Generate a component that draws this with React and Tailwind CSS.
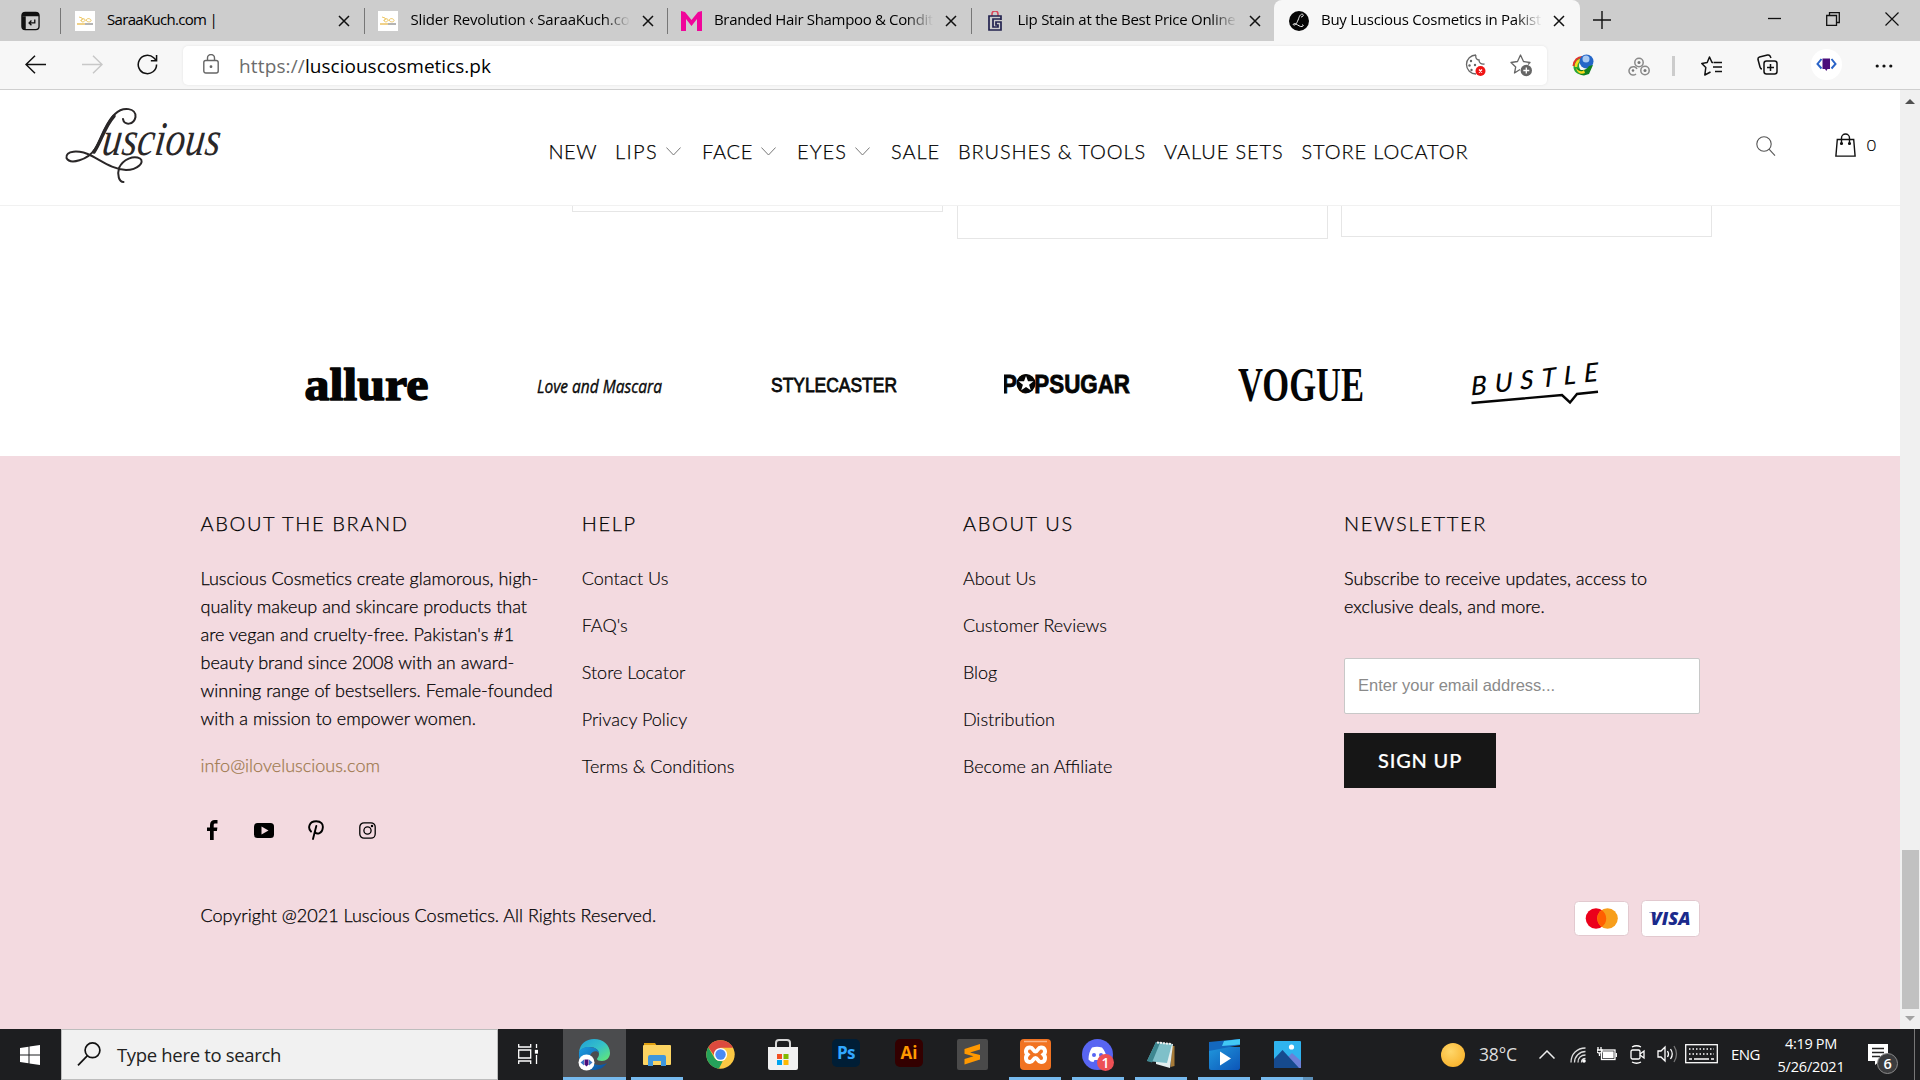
import React, { useLayoutEffect, useRef, useState } from "react";

/* Text whose tracking is adjusted so that it spans the given width. */
function Fit({ w, className = "", children }) {
  const ref = useRef(null);
  const [ls, setLs] = useState(0);
  useLayoutEffect(() => {
    const el = ref.current;
    const n = el.textContent.length;
    setLs((w - el.getBoundingClientRect().width) / n);
  }, [w]);
  return (
    <span ref={ref} className={"inline-block whitespace-nowrap " + className} style={{ letterSpacing: ls + "px" }}>
      {children}
    </span>
  );
}

const Cross = () => (
  <svg width="12" height="12" viewBox="0 0 12 12" className="shrink-0" stroke="#111" strokeWidth="1.5">
    <path d="M1 1l10 10M11 1L1 11" />
  </svg>
);

const SaraaIcon = () => (
  <svg width="20" height="20" viewBox="0 0 20 20">
    <rect width="20" height="20" fill="#fff" />
    <path d="M4 6l3 1 1 2M6 10c0-3 4-3 4-1s-4 3-4 0M11 10c0-3 4-3 5-1s-4 3-5 0" stroke="#eec866" fill="none" strokeWidth="1" />
    <path d="M2 13h8" stroke="#e8b94a" strokeWidth="1.3" />
    <path d="M10 13h8" stroke="#8c8c8c" strokeWidth="1.3" />
  </svg>
);
const MIcon = () => (
  <svg width="21" height="20" viewBox="0 0 21 20">
    <path d="M0 0l4 1 6.500 8L17 1l4-1v20h-5V8l-5.500 7L5 8v12H0z" fill="#f0069a" />
  </svg>
);
const GIcon = () => (
  <svg width="20" height="20" viewBox="0 0 20 20" fill="none">
    <path d="M7 5V3a3 3 0 0 1 6 0v2" stroke="#d8455a" strokeWidth="1.500" />
    <path d="M16 9V5H4v14h12v-8h-5v3h2v2H8V8h8" stroke="#23234f" strokeWidth="1.700" />
  </svg>
);
const LIcon = () => (
  <svg width="20" height="20" viewBox="0 0 20 20">
    <circle cx="10" cy="10" r="10" fill="#050505" />
    <path d="M12 6c1.500 0 3-1.500 2-2.500s-3 0-4 3-3 8-5 7.500 0-2 2-1 4 3 6 2.500 1.500-2 0-1.500" stroke="#eee" strokeWidth="1" fill="none" />
  </svg>
);

function Tab({ icon, title, w, mask }) {
  return (
    <div className="flex h-[41px] w-[303.500px] items-center">
      <div className="h-[26px] w-px bg-[#777]" />
      <div className="ml-[13px] flex w-[21px] justify-center">{icon}</div>
      <div className={"-mt-0.5 ml-3 flex w-[219px] overflow-hidden text-[15px] " + (mask ? "[mask-image:linear-gradient(90deg,#000_88%,transparent_100%)]" : "")}>
        <Fit w={w}>{title}</Fit>
      </div>
      <div className="ml-3 mt-px"><Cross /></div>
    </div>
  );
}

function TabBar() {
  return (
    <div className="flex h-[41px] bg-[#cdcdcd] text-black">
      <div className="flex w-[60px] items-center pl-[21px]">
        <svg width="19" height="20" viewBox="0 0 20 20" fill="none">
          <rect x="1" y="1" width="18" height="18" rx="3.500" stroke="#111" strokeWidth="1.400" />
          <path d="M1 5h18v-1c0-2-1-3-3-3H4C2 1 1 2 1 4z" fill="#111" />
          <path d="M1 5h4v14c-3 0-4-1-4-3z" fill="#111" />
          <path d="M14.500 8.500v3.500h-6M11 9.500L8.500 12l2.500 2.500" stroke="#111" strokeWidth="1.400" />
        </svg>
      </div>
      <Tab icon={<SaraaIcon />} title="SaraaKuch.com |" w={110} />
      <Tab icon={<SaraaIcon />} title="Slider Revolution ‹ SaraaKuch.co" w={219} mask />
      <Tab icon={<MIcon />} title="Branded Hair Shampoo & Condit" w={219} mask />
      <Tab icon={<GIcon />} title="Lip Stain at the Best Price Online" w={218} mask />
      <div className="flex w-[306px] items-center rounded-t-lg bg-[#f7f7f7]">
        <div className="ml-[15px]"><LIcon /></div>
        <div className="-mt-0.5 ml-3 flex w-[221px] overflow-hidden text-[15px] [mask-image:linear-gradient(90deg,#000_88%,transparent_100%)]">
          <Fit w={220}>Buy Luscious Cosmetics in Pakist</Fit>
        </div>
        <div className="ml-[11px] mt-px"><Cross /></div>
      </div>
      <div className="flex flex-1 items-center">
        <svg width="18" height="18" viewBox="0 0 18 18" className="-mt-0.5 ml-[13px]" stroke="#111" strokeWidth="1.400"><path d="M9 0v18M0 9h18" /></svg>
        <svg width="13" height="13" viewBox="0 0 13 13" className="ml-[157px] -mt-0.5" stroke="#111" strokeWidth="1.300"><path d="M0 5.500h13" /></svg>
        <svg width="14" height="14" viewBox="0 0 14 14" className="mb-1 ml-[45px]" stroke="#111" strokeWidth="1.300" fill="none"><path d="M.7 3.500h9.800v9.800H.7zM3.500 3.500V.7h9.800v9.800h-2.800" /></svg>
        <svg width="14" height="14" viewBox="0 0 14 14" className="mb-1 ml-[45px]" stroke="#111" strokeWidth="1.200"><path d="M.5.5l13 13M13.500.5l-13 13" /></svg>
      </div>
    </div>
  );
}

function Toolbar() {
  return (
    <div className="flex h-[49px] items-start border-b border-[#cfcfcf] bg-[#f7f7f7] pt-[5px]">
      <div className="flex h-[39px] w-[183px] items-center">
        <svg width="21" height="19" viewBox="0 0 21 19" className="ml-[25px] -mt-0.5" stroke="#111" strokeWidth="1.500" fill="none"><path d="M21 9.500H1M10 .8L1 9.500l9 8.700" /></svg>
        <svg width="21" height="19" viewBox="0 0 21 19" className="ml-9 -mt-0.5" stroke="#c8c8c8" strokeWidth="1.500" fill="none"><path d="M0 9.500h20M11 .8l9 8.700-9 8.700" /></svg>
        <svg width="21" height="21" viewBox="0 0 22 22" className="ml-[34px] -mt-0.5" stroke="#111" strokeWidth="1.600" fill="none"><path d="M20.500 11A9.600 9.600 0 1 1 17.500 4L20 6.500M20.500 1v6h-6" /></svg>
      </div>
      <div className="flex h-[39px] w-[1364px] items-center rounded-[5px] bg-white shadow-[0_0_3px_rgba(0,0,0,0.08)]">
        <svg width="16" height="20" viewBox="0 0 16 20" className="-mt-1 ml-5" stroke="#666" strokeWidth="1.400" fill="none">
          <rect x=".8" y="6.500" width="14.400" height="12.500" rx="2" /><path d="M4.500 6.500V4a3.500 3.500 0 0 1 7 0v2.500" /><circle cx="8" cy="12.700" r=".7" fill="#555" />
        </svg>
        <div className="ml-[20px] mt-px flex text-[19px]">
          <Fit w={66} className="text-[#6c6c6c]">https://</Fit>
          <Fit w={186} className="text-black">lusciouscosmetics.pk</Fit>
        </div>
        <svg width="22" height="22" viewBox="0 0 22 22" className="-mt-px ml-[973px]" fill="none" stroke="#666" strokeWidth="1.300">
          <path d="M12 1a9.500 9.500 0 1 0 0 19M12 1c-1 3 1 5 3 5 0 3 2 4.500 5.500 4" /><g fill="#666" stroke="none"><circle cx="7" cy="7" r="1.200" /><circle cx="5.500" cy="11.500" r="1.200" /><circle cx="11" cy="11" r="1.200" /><circle cx="7.500" cy="16" r="1.200" /></g>
          <circle cx="16.500" cy="17" r="5" fill="#f01414" stroke="none" /><path d="M15 15.500l3 3m0-3l-3 3" stroke="#fff" />
        </svg>
        <svg width="23" height="23" viewBox="0 0 23 23" className="ml-[24px]" fill="none" stroke="#666" strokeWidth="1.300" strokeLinejoin="round">
          <path d="M10 15.500L4.500 19l1.200-6L1 8.500l6.500-1L10.500 1l3 6.500 6.500 1-2 2" />
          <circle cx="16.300" cy="16.500" r="5.700" fill="#666" stroke="none" /><path d="M16.300 13.500v6M13.300 16.500h6" stroke="#fff" />
        </svg>
      </div>
      <div className="flex h-[39px] flex-1 items-center">
        <svg width="22" height="22" viewBox="0 0 22 22" className="ml-[25px] -mt-0.5">
          <path d="M2 10C4 4 8 2 13 3l-1 4c-5 0-6 4-4 8l2 6C4 20 0 16 2 10z" fill="#27a737" /><path d="M1.500 12C2 6 6 3 10 3" stroke="#e3342c" strokeWidth="2" fill="none" /><path d="M4 13c0-4 2-7 7-8" stroke="#f8d81e" strokeWidth="2.500" fill="none" /><circle cx="14.500" cy="7.500" r="7" fill="#2466c8" /><circle cx="14" cy="5" r="3.500" fill="#a8c9f2" /><path d="M5 14c4 3 9 3 12-2l4-1-4 9-5 1.500c-4 0-6-3-7-7.500z" fill="#12801f" /><path d="M4 14c3 4 6 4 8 2l1 3c-4 2-8 0-9-5z" fill="#f8d81e" />
        </svg>
        <svg width="22" height="19" viewBox="0 0 22 19" className="ml-[34px] mt-0.5" fill="none" stroke="#8a8a8a" strokeWidth="1.500">
          <circle cx="11" cy="5.500" r="4.200" /><circle cx="17" cy="13.500" r="4.200" /><path d="M8 17a4.200 4.200 0 1 1 1-5" /><g fill="#777" stroke="none"><circle cx="11" cy="5.500" r="1.500" /><circle cx="17" cy="13.500" r="1.500" /><circle cx="5" cy="13.500" r="1.300" /></g>
        </svg>
        <div className="ml-[22px] h-5 w-[3px] bg-[#ccc]" />
        <svg width="21" height="20" viewBox="0 0 21 20" className="ml-[26px]" fill="none" stroke="#111" strokeWidth="1.500" strokeLinejoin="round"><path d="M12.500 6.500H11L8.500 1 6.200 6.500l-5.400 1 4 4-1 7.500 5.700-3M13 6.500h8M12 11h9M14 15.500h7" /></svg>
        <svg width="21" height="21" viewBox="0 0 21 21" className="ml-[35px] -mt-0.5" fill="none" stroke="#111" strokeWidth="1.500"><path d="M14 4L13 2Q12 .6 10.500 1L2.500 3Q.7 3.500 1 5.500L3 13q.5 2 2 2" /><rect x="7" y="7" width="13" height="13" rx="2.500" /><path d="M13.500 10v7M10 13.500h7" /></svg>
        <svg width="31" height="31" viewBox="0 0 31 31" className="ml-[33px] -mt-0.5"><circle cx="15.500" cy="15.500" r="15.500" fill="#fff" /><path d="M10.500 10L6.500 15l4 4.500M20.500 10l4 5-4 4.500" fill="none" stroke="#2a64c8" strokeWidth="2" /><path d="M11.500 9.500h7.500v10.500h-2.500l-1.200 2-1.300-2h-2.500z" fill="#4b0e7a" /></svg>
        <svg width="18" height="4" viewBox="0 0 18 4" className="ml-[33px]" fill="#111"><circle cx="2.200" cy="2" r="1.600" /><circle cx="9" cy="2" r="1.600" /><circle cx="15.800" cy="2" r="1.600" /></svg>
      </div>
    </div>
  );
}

const Chevron = () => (
  <svg width="15" height="9" viewBox="0 0 15 9" className="mr-[3.500px]" fill="none" stroke="#777" strokeWidth="1"><path d="M.4.5l7.100 7.500L14.600.5" /></svg>
);

function Header() {
  const items = [["NEW", 48.5], ["LIPS", 43, 1], ["FACE", 51, 1], ["EYES", 50, 1], ["SALE", 49], ["BRUSHES & TOOLS", 188], ["VALUE SETS", 119.5], ["STORE LOCATOR", 167]];
  return (
    <header className="flex h-[116px] border-b border-[#f1f1f1] bg-white">
      <svg width="160" height="80" viewBox="62 106 160 80" className="ml-[62px] mt-4" fill="none">
        <path d="M123 119C124 126 134 125 135.500 117C136.500 108 123 106 115 114C105 124 101 141 95 149C88 160 70 165 66.500 158C65 151 78 149 92 156C105 163 113 169 126 170C138 170 145 162 140 158.500C134 155 123 159 119 168C117 175 119 182 123.500 182" stroke="#2a2728" strokeWidth="2" strokeLinecap="round" />
        <path d="M114 116C104 127 101 142 94 152" stroke="#2a2728" strokeWidth="3.500" strokeLinecap="round" />
        <text transform="translate(101 155) skewX(-7) scale(1 1.270)" textLength="118" lengthAdjust="spacingAndGlyphs" className="font-['Liberation_Serif'] text-[38px] italic" fill="#2a2728">uscious</text>
      </svg>
      <nav className="ml-[326.500px] mt-[46px] flex h-[30px] items-center gap-[18px] font-['Lato'] text-[20px] text-black [-webkit-text-stroke:0.25px_#000]">
        {items.map(([t, w, c]) => (
          <div key={t} className="flex items-center gap-[7.500px]"><Fit w={w} className="font-light">{t}</Fit>{c && <Chevron />}</div>
        ))}
      </nav>
      <div className="ml-auto mr-[24px] mt-[42px] flex h-[26px] items-start">
        <svg width="20" height="21" viewBox="0 0 20 21" className="mr-[59px] mt-1" fill="none" stroke="#555" strokeWidth="1.100"><circle cx="8" cy="8" r="7.200" /><path d="M13 13.200l6 6.500" /></svg>
        <svg width="21" height="24" viewBox="0 0 21 24" className="mt-px" fill="none" stroke="#111" strokeWidth="1.400"><path d="M2.300 6.500h16.400l1.400 16.600H.9zM6.500 10.500V5a4 4 0 0 1 8 0v5.500" /><circle cx="6.500" cy="10.500" r=".9" fill="#111" /><circle cx="14.500" cy="10.500" r=".9" fill="#111" /></svg>
        <span className="ml-[11px] mt-px font-['Lato'] text-[16px] font-light leading-6 text-black [-webkit-text-stroke:0.2px_#000]">0</span>
      </div>
    </header>
  );
}

const PRESS = [
  <svg key="a" width="126" height="44" viewBox="0 0 126 44">
    <text x="0.500" y="37" textLength="124" lengthAdjust="spacingAndGlyphs" className="font-['Liberation_Serif'] text-[46px] font-bold" fill="#050505" stroke="#050505" strokeWidth="1.500" strokeLinejoin="round">allure</text>
  </svg>,
  <svg key="l" width="126" height="44" viewBox="0 0 126 44">
    <text x="0" y="29.500" textLength="125" lengthAdjust="spacingAndGlyphs" className="font-['Open_Sans'] text-[19px] font-medium italic" fill="#0a0a0a" stroke="#0a0a0a" strokeWidth=".4">Love and Mascara</text>
  </svg>,
  <svg key="s" width="126" height="44" viewBox="0 0 126 44">
    <text x="0" y="28.500" textLength="126" lengthAdjust="spacingAndGlyphs" className="font-['Liberation_Sans'] text-[20px]" fill="#0a0a0a" stroke="#0a0a0a" strokeWidth=".8">STYLECASTER</text>
  </svg>,
  <svg key="p" width="128" height="44" viewBox="0 0 128 44">
    <text x="-2" y="30" textLength="128" lengthAdjust="spacingAndGlyphs" className="font-['Liberation_Sans'] text-[25px] font-bold" fill="#050505" stroke="#050505" strokeWidth=".8">POPSUGAR</text>
    <circle cx="22" cy="20.500" r="9.500" fill="#050505" />
    <path d="M22 13l2 5.200h5.500l-4.400 3.500 1.700 5.600-4.800-3.300-4.800 3.300 1.700-5.600-4.400-3.500h5.500z" fill="#fff" />
  </svg>,
  <svg key="v" width="126" height="44" viewBox="0 0 126 44">
    <text transform="scale(1 1.400)" x="0" y="27.200" textLength="126" lengthAdjust="spacingAndGlyphs" className="font-['Liberation_Serif'] text-[35px] font-bold" fill="#050505">VOGUE</text>
  </svg>,
  <svg key="b" width="128" height="44" viewBox="0 0 128 44" className="overflow-visible">
    <g transform="translate(0 32.500) skewY(-6.500)">
      <text x="0" y="0" textLength="127" lengthAdjust="spacing" className="font-['Lato'] text-[26px] font-medium italic" fill="#050505">BUSTLE</text>
    </g>
    <path d="M.5 40L91 32l8 7.500L106 31l21-2.200" fill="none" stroke="#050505" strokeWidth="2.400" />
  </svg>,
];

function Main() {
  return (
    <main className="h-[250px] bg-white">
      <div className="flex h-[130px] items-start gap-[13.500px] pl-[572px]">
        <div className="h-[6px] w-[371px] border-x border-b border-[#e6e6e6]" />
        <div className="h-[33px] w-[371px] border-x border-b border-[#e6e6e6]" />
        <div className="h-[31px] w-[371px] border-x border-b border-[#e6e6e6]" />
      </div>
      <div className="flex pl-[303.500px] pt-[27px]">
        {PRESS.map((p, i) => <div key={i} className="w-[233.500px]">{p}</div>)}
      </div>
    </main>
  );
}

const H = ({ w, children }) => (
  <h3 className="h-[30px] text-[20px] font-light leading-[30px] text-black [-webkit-text-stroke:0.25px_#000]"><Fit w={w}>{children}</Fit></h3>
);

const BODY = "text-[18.050px] font-light leading-7 [-webkit-text-stroke:0.25px_currentColor]";

function Links({ title, w, items }) {
  return (
    <div className="w-[381.200px]">
      <H w={w}>{title}</H>
      <ul className="mt-[26px] space-y-[19px]">
        {items.map((t) => <li key={t} className="text-[18.050px] font-light leading-7 text-black [-webkit-text-stroke:0.15px_#000]">{t}</li>)}
      </ul>
    </div>
  );
}

function Footer() {
  return (
    <footer className="h-[573px] bg-[#f3dae0] pl-[200.500px] pt-[52px] font-['Lato'] text-black">
      <div className="flex h-[391px]">
        <div className="w-[381.200px]">
          <H w={208}>ABOUT THE BRAND</H>
          <p className={"mt-[26px] whitespace-nowrap " + BODY}>
            Luscious Cosmetics create glamorous, high-<br />quality makeup and skincare products that<br />are vegan and cruelty-free. Pakistan's #1<br />beauty brand since 2008 with an award-<br />winning range of bestsellers. Female-founded<br />with a mission to empower women.
          </p>
          <p className={"mt-[19px] text-[#a07a50] " + BODY}>info@iloveluscious.com</p>
          <div className="mt-[41px] flex h-5 items-center text-black">
            <svg width="11" height="20" viewBox="0 0 11 20" className="ml-[6.500px]"><path d="M3 20V11H0V7.500h3V5c0-3.300 2-5 4.700-5H10.500v3.500H8.500C7 3.500 6.700 4.200 6.700 5.200v2.300h3.700L9.900 11H6.700v9z" fill="#000" /></svg>
            <svg width="20" height="15" viewBox="0 0 20 15" className="ml-9"><rect width="20" height="15" rx="3.500" fill="#000" /><path d="M7.500 3.500v8l7-4z" fill="#f3dae0" /></svg>
            <svg width="16" height="20" viewBox="0 0 16 20" className="ml-[34px]" fill="none" stroke="#000" strokeWidth="1.900" strokeLinecap="round"><path d="M3 11.500C-.5 8 1 1.200 8.200 1.200c5 0 7 3 6.600 6.500C14.300 14 8 15 7 11.500M8.300 6L5 19" /></svg>
            <svg width="17" height="17" viewBox="0 0 17 17" className="ml-[35px]" fill="none" stroke="#000" strokeWidth="1.300"><rect x=".8" y=".8" width="15.400" height="15.400" rx="4.200" /><circle cx="8.500" cy="8.500" r="3.600" /><circle cx="13" cy="4" r=".6" fill="#000" /></svg>
          </div>
        </div>
        <Links title="HELP" w={55} items={["Contact Us", "FAQ's", "Store Locator", "Privacy Policy", "Terms & Conditions"]} />
        <Links title="ABOUT US" w={111} items={["About Us", "Customer Reviews", "Blog", "Distribution", "Become an Affiliate"]} />
        <div className="w-[356px]">
          <H w={143}>NEWSLETTER</H>
          <p className={"mt-[26px] " + BODY}>Subscribe to receive updates, access to<br />exclusive deals, and more.</p>
          <div className="mt-[38px] flex h-14 items-center rounded-[2px] border border-[#c8c8c8] bg-white pb-0.5 pl-[13px] font-['Liberation_Sans'] text-[16.500px] text-[#8a8a8a]">
            <Fit w={197}>Enter your email address...</Fit>
          </div>
          <div className="mt-[19px] flex h-[55px] w-[152px] items-center justify-center bg-[#161616] pb-0.5 text-[20px] font-medium text-white [-webkit-text-stroke:0.2px_#fff]"><Fit w={84}>SIGN UP</Fit></div>
        </div>
      </div>
      <div className="flex w-[1499px] items-center">
        <p className={"-mt-1.5 " + BODY}>Copyright @2021 Luscious Cosmetics. All Rights Reserved.</p>
        <div className="ml-auto flex h-[38px] w-[55px] items-center">
          <svg width="55" height="35" viewBox="0 0 55 35"><rect x=".5" y=".5" width="54" height="34" rx="4" fill="#fff" stroke="#e2c9cf" /><circle cx="22" cy="17.500" r="10.300" fill="#eb001b" /><circle cx="33.500" cy="17.500" r="10.300" fill="#f79e1b" /><path d="M27.750 9a10.300 10.300 0 0 1 0 17a10.300 10.300 0 0 1 0-17" fill="#ff5f00" /></svg>
        </div>
        <svg width="59" height="37" viewBox="0 0 59 37" className="ml-3"><rect x=".5" y=".5" width="58" height="36" rx="4" fill="#fff" stroke="#e2c9cf" /><text x="9.500" y="25" textLength="40" lengthAdjust="spacingAndGlyphs" className="font-['Open_Sans'] text-[18px] font-extrabold italic" fill="#1a2a8c">VISA</text><path d="M8 12.300h6l1.500 3C14 13.800 11 12.800 8 12.600z" fill="#1a2a8c" /></svg>
      </div>
    </footer>
  );
}

const ICONS = [
  <svg key="0" width="32" height="32" viewBox="0 0 32 32">
    <defs>
      <linearGradient id="eg" x1="0" y1="0" x2="1" y2="1"><stop offset="0" stopColor="#1f9fd8" /><stop offset=".5" stopColor="#35c1c9" /><stop offset="1" stopColor="#66eb6e" /></linearGradient>
      <linearGradient id="eb" x1="0" y1="0" x2="1" y2="1"><stop offset="0" stopColor="#1b9de2" /><stop offset="1" stopColor="#0c4a97" /></linearGradient>
    </defs>
    <path d="M1 13C2 5 8 0 16 0c9 0 16 6 16 14 0 5-4 8-8 8-3 0-5-1-5-2s2-2 2-5c0-4-4-7-9-7C6 8 2 11 1 13z" fill="url(#eg)" />
    <path d="M1 13c1-3 5-5 10-5 6 0 10 3 10 6-2-3-8-2-9 3-1 7 6 12 17 7-4 5-8 7-13 7C7 32 0 25 1 13z" fill="url(#eb)" />
    <circle cx="8.500" cy="23.500" r="8" fill="#fff" /><path d="M2.500 23.500l3.500-3v6zM14.500 23.500l-3.500-3v6z" fill="#3a77c8" /><path d="M6.500 20.500h4v5l-2 2-2-2z" fill="#4b0e7a" />
  </svg>,
  <svg key="1" width="28" height="24" viewBox="0 0 28 24"><path d="M1 0h11l2 3H1z" fill="#e0a010" /><rect y="2" width="28" height="20" rx="1" fill="#fcd462" /><path d="M5 23V14q0-2 2-2h14q2 0 2 2v9h-5v-5h-8v5z" fill="#3f97dc" /></svg>,
  <svg key="2" width="29" height="29" viewBox="0 0 29 29"><circle cx="14.500" cy="14.500" r="14.200" fill="#fbc843" /><path d="M2.200 7.300A14.200 14.200 0 0 1 27 7.800H14.500l-5 9.500z" fill="#dc4a3e" /><path d="M2.200 7.300l6.500 11q2.500 3.500 8 3L13 28.600A14.200 14.200 0 0 1 2.200 7.300z" fill="#25a25a" /><circle cx="14.500" cy="14.500" r="6.600" fill="#fff" /><circle cx="14.500" cy="14.500" r="5.200" fill="#4a8af4" /></svg>,
  <svg key="3" width="30" height="31" viewBox="0 0 30 31"><path d="M8 9V4q0-3 3-3h8q3 0 3 3v5" fill="none" stroke="#d6d6d6" strokeWidth="2" /><path d="M0 8h30v21q0 2-2 2H2q-2 0-2-2z" fill="#f1f1f1" /><rect x="9" y="15" width="5" height="5" fill="#f25022" /><rect x="15.500" y="15" width="5" height="5" fill="#7fba00" /><rect x="9" y="21" width="5" height="5" fill="#00a4ef" /><rect x="15.500" y="21" width="5" height="5" fill="#ffb900" /></svg>,
  <div key="4" className="-mt-[3px] flex h-7 w-7 items-center justify-center rounded-[5px] bg-[#001e36] pb-px text-[17px] font-bold text-[#31a8ff]"><Fit w={18}>Ps</Fit></div>,
  <div key="5" className="-mt-[3px] flex h-7 w-7 items-center justify-center rounded-[5px] bg-[#330000] pb-px text-[17px] font-bold text-[#ff9a00]"><Fit w={17}>Ai</Fit></div>,
  <svg key="6" width="31" height="31" viewBox="0 0 31 31"><rect width="31" height="31" rx="2" fill="#4a4a4a" /><path d="M23 5v5.500L13 13.500 23 16v4.500L7.500 25.500V20l9-2.800-9-2.500V10z" fill="#ff9800" /></svg>,
  <svg key="7" width="31" height="31" viewBox="0 0 31 31"><rect width="31" height="31" rx="4" fill="#f17322" /><path d="M4 2.500h23" stroke="#f9b78a" strokeWidth="1.500" /><path d="M10 8.500c3.500 0 3 4 5.500 4s2-4 5.500-4c4.500 0 5 5 2.500 7 2.500 2.500 2 7.500-2.500 7.500-3.500 0-3-4-5.500-4s-2 4-5.500 4c-4.500 0-5-5-2.500-7.500-2.500-2-2-7 2.500-7z" fill="none" stroke="#fff" strokeWidth="4" /></svg>,
  <svg key="8" width="32" height="32" viewBox="0 0 32 32"><circle cx="15.500" cy="15.500" r="15.500" fill="#5865f2" /><path d="M10 8.500q5-1.500 10 0 4.500 5 4.500 12-3 2.500-5 2.500l-1-2h-6l-1 2q-3 0-5-2.500 0-7 3.500-12z" fill="#fff" /><circle cx="12" cy="16" r="2" fill="#5865f2" /><circle cx="19" cy="16" r="2" fill="#5865f2" /><circle cx="23.500" cy="23.500" r="8.500" fill="#ed5055" /><text x="19.500" y="28.500" className="font-['Open_Sans'] text-[14px] font-semibold" fill="#fff">1</text></svg>,
  <svg key="9" width="28" height="28" viewBox="0 0 28 28"><path d="M25 5l2.500 0v20l-4 1z" fill="#a67a38" /><path d="M9 1l17 2-3 24-14-4z" fill="#e4efef" /><path d="M9 1l16 2-5 19L0 20z" fill="#7fc0c9" /><path d="M9 1l-9 19 5 1.500L13 2z" fill="#3d8790" /><path d="M10 1.500l14 1.500" stroke="#eee" strokeWidth="2" strokeDasharray="2 1" /></svg>,
  <svg key="10" width="31" height="31" viewBox="0 0 31 31"><defs><linearGradient id="mv" x1="0" y1="0" x2="1" y2="1"><stop offset="0" stopColor="#2097dc" /><stop offset="1" stopColor="#0c55b8" /></linearGradient></defs><path d="M0 8h31v21q0 2-2 2H2q-2 0-2-2z" fill="url(#mv)" /><path d="M0 3l31-3v6L0 12z" fill="#1468be" /><path d="M15 2l16-2v5.500L13 7z" fill="#42c8f5" /><path d="M11 12.500v14l11-7z" fill="#fff" /></svg>,
  <svg key="11" width="27" height="27" viewBox="0 0 27 27"><rect width="27" height="27" rx="1" fill="#2fb3ee" /><path d="M12 18l6-6 9 8v7H12z" fill="#6c80d8" /><path d="M0 18l8.500-9L25 27H0z" fill="#164a8e" /><circle cx="17.500" cy="6" r="2.600" fill="#fff" /></svg>,
];
const OPEN = [1, 1, 0, 0, 0, 0, 0, 1, 1, 1, 1, 2];

function Taskbar() {
  return (
    <div className="flex h-[51px] bg-[#1d1e20] text-white">
      <div className="flex w-[61px] items-center pl-5">
        <svg width="20" height="20" viewBox="0 0 20 20" fill="#fff"><path d="M0 3l8.500-1.200V9.500H0zM9.500 1.600L20 0v9.500H9.500zM0 10.500h8.500v7.700L0 17zM9.500 10.500H20V20L9.500 18.400z" /></svg>
      </div>
      <div className="flex w-[437px] items-center border border-[#bdbdbd] bg-[#f1f1f1] text-[18.500px] text-[#222]">
        <svg width="24" height="24" viewBox="0 0 24 24" className="-mt-px ml-[15px]" fill="none" stroke="#111" strokeWidth="1.700"><circle cx="15.500" cy="8.300" r="7.400" /><path d="M10.200 13.800L1 23.300" /></svg>
        <div className="ml-4"><Fit w={164}>Type here to search</Fit></div>
      </div>
      <div className="flex w-[64.500px] items-center pl-5">
        <svg width="20" height="20" viewBox="0 0 20 20" className="-mt-0.5" fill="none" stroke="#fff" strokeWidth="1.300"><path d="M.7 0v3h12V0M.7 6h12v8H.7zM.7 20v-3h12v3M18.500 0v4M18.500 11v9" /><rect x="17.500" y="6.500" width="2" height="2.500" fill="#fff" /></svg>
      </div>
      <div className="flex">
        {ICONS.map((ic, i) => (
          <div key={i} className={"flex w-[63px] flex-col items-center " + (i === 0 ? "bg-[#4b4c4e]" : "")}>
            <div className="flex h-12 items-center pt-[3px]">{ic}</div>
            {i === 0 && <div className="h-[3px] w-full bg-[#76b9ed]" />}
            {i > 0 && OPEN[i] === 1 && <div className="h-[3px] w-[52px] bg-[#76b9ed]" />}
            {OPEN[i] === 2 && <div className="h-[3px] w-[52px] border-r-[10px] border-[#5c8fb8] bg-[#76b9ed]" />}
          </div>
        ))}
      </div>
      <div className="flex flex-1 items-center justify-end">
        <div className="h-6 w-6 rounded-full bg-[radial-gradient(circle_at_40%_35%,#ffd76a,#f7a91c)]" />
        <div className="ml-3.5 w-[38px] text-[17.500px] text-[#ddd]"><Fit w={38}>38°C</Fit></div>
        <svg width="16" height="9" viewBox="0 0 16 9" className="ml-[22px]" fill="none" stroke="#eee" strokeWidth="1.500"><path d="M.5 8.500L8 1l7.500 7.500" /></svg>
        <svg width="16" height="16" viewBox="0 0 16 16" className="ml-[15px]" fill="none" stroke="#ddd" strokeWidth="1.300"><path d="M1 15.500C1 7 7 1 15.500 1M4.500 15.500c0-6 5-11 11-11M8 15.500C8 11 11 8 15.500 8" /><path d="M11.500 15.500q0-4 4-4" /><circle cx="14" cy="14" r="1.800" fill="#fff" stroke="none" /></svg>
        <svg width="20" height="14" viewBox="0 0 20 14" className="-mt-0.5 ml-[11px]" fill="none" stroke="#fff" strokeWidth="1.300"><rect x="4.500" y="3" width="13.500" height="9.500" /><rect x="6.500" y="5" width="9.500" height="5.500" fill="#fff" /><path d="M19.300 6v4M1 0v3M4 0v3M0 3h5v2q-2.500 2-5 0zM2.500 6v3" /></svg>
        <svg width="15" height="19" viewBox="0 0 15 19" className="ml-[13px]" fill="none" stroke="#fff" strokeWidth="1.300"><rect x="1" y="5" width="9" height="9" rx="1.500" /><path d="M10 9l4-3v7l-4-3M2 2Q6.500-.5 11 2M2 17q4.500 2.500 9 0" /></svg>
        <svg width="21" height="18" viewBox="0 0 21 18" className="-mt-0.5 ml-3" fill="none" stroke="#fff" strokeWidth="1.300"><path d="M1 6h3l4-4v14l-4-4H1zM10.500 6q2 3 0 6M13.500 4q3.500 5 0 10" /><path d="M17 1q5 8 0 16" stroke="#777" /></svg>
        <svg width="33" height="20" viewBox="0 0 33 20" className="-mt-0.5 ml-[7px]" fill="none" stroke="#fff" strokeWidth="1.300"><rect x=".7" y=".7" width="31.600" height="18" /><path d="M4 5h25M4 10h25" strokeDasharray="1.500 2" /><path d="M4 15h3M9 15h15M26 15h3" /></svg>
        <div className="ml-[13px] w-[29px] text-[15px]"><Fit w={29}>ENG</Fit></div>
        <div className="ml-[17px] flex w-[68px] flex-col items-center text-[14.500px] leading-[23px]"><Fit w={52}>4:19 PM</Fit><Fit w={67}>5/26/2021</Fit></div>
        <svg width="31" height="31" viewBox="0 0 31 31" className="ml-[23px] mt-2.5"><path d="M0 0h20v17h-8l-5 4v-4H0z" fill="#fff" /><path d="M4 4.500h12M4 8.500h12M4 12.500h8" stroke="#222" strokeWidth="1.300" /><circle cx="19.500" cy="19.500" r="10" fill="#3b3c3e" stroke="#8b8b8b" /><text x="15.500" y="25" className="font-['Open_Sans'] text-[14.500px] font-semibold" fill="#fff">6</text></svg>
        <div className="ml-[15px] mr-[5px] h-[51px] w-px bg-[#777]" />
      </div>
    </div>
  );
}

export default function App() {
  return (
    <div className="flex h-[1080px] w-[1920px] flex-col overflow-hidden bg-white font-['Open_Sans',sans-serif]">
      <TabBar />
      <Toolbar />
      <div className="flex h-[939px]">
        <div className="w-[1900px]">
          <Header />
          <Main />
          <Footer />
        </div>
        <div className="flex w-5 flex-col items-center bg-[#f0f0f0]">
          <svg width="10" height="5" viewBox="0 0 10 5" className="mt-[9px]" fill="#505050"><path d="M0 5l5-5 5 5z" /></svg>
          <div className="mt-auto h-[159px] w-[17px] bg-[#c1c1c1]" />
          <svg width="10" height="5" viewBox="0 0 10 5" className="mb-2 mt-[7px]" fill="#a3a3a3"><path d="M0 0h10L5 5z" /></svg>
        </div>
      </div>
      <Taskbar />
    </div>
  );
}
